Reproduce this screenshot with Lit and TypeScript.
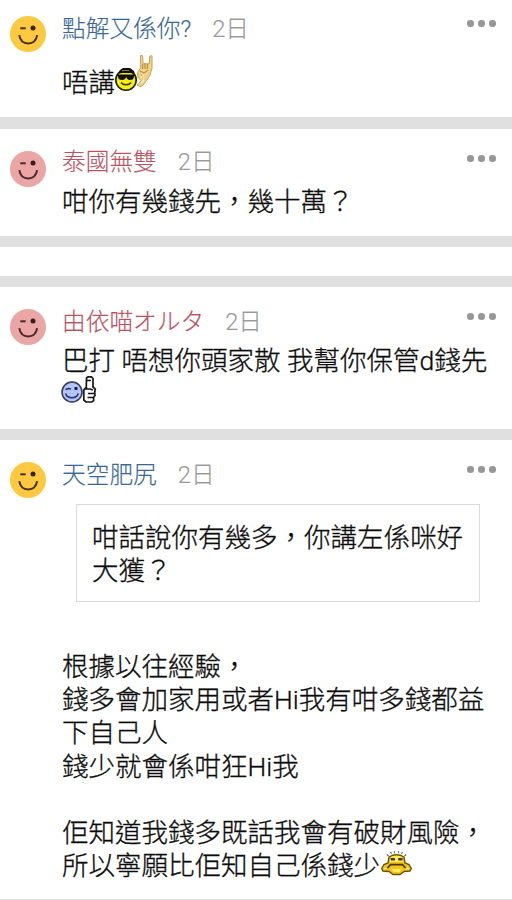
import { LitElement, html, css, svg, TemplateResult } from "lit";
import { customElement, property } from "lit/decorators.js";

@customElement("wink-avatar")
class WinkAvatar extends LitElement {
  @property() tone = "gold";
  static styles = css`
    :host { display: block; width: 36px; height: 36px; }
    svg { display: block; }
    .gold { fill: #fcc940; }
    .pink { fill: #eaa5a5; }
    .line { fill: none; stroke: #493018; stroke-width: 2; }
    .eye { fill: #38220f; }
    .pink ~ .line { stroke: #50282c; }
    .pink ~ .eye { fill: #3a1d22; }
  `;
  render() {
    return html`<svg width="36" height="36" viewBox="0 0 36 36">
      <circle class=${this.tone} cx="18" cy="18" r="18" />
      <path class="line" d="M10.3 12.3h5.4" />
      <path class="line" d="M9.3 19.2c.8 5.2 4.3 8.3 8.9 8.3s8.100-3.100 8.900-8.300" />
      <circle class="eye" cx="23" cy="11.900" r="2.500" />
    </svg>`;
  }
}

const drawings: Record<string, TemplateResult> = {
  cool: svg`
    <circle cx="11" cy="13" r="10.200" fill="#f4ef0c" stroke="#1c1c00" stroke-width="1.600"/>
    <path d="M3 7L5 3 8 1h7l4 3 1 4-4-2H7z" fill="#111"/>
    <path d="M7 3.500h7" stroke="#777" stroke-width="1"/>
    <path d="M2 7.500h18v1.500h-1c0 3-1.500 4-4 4s-3.500-1.500-3.800-3.500C11 11.500 9.500 13 7 13s-4-1-4-4H2z" fill="#111"/>
    <path d="M6 15.500c2 3 8 3 10 0" fill="none" stroke="#3d3500" stroke-width="1.400"/>`,
  horns: svg`
    <path d="M3.500 .5l2 .2.600 8h6.200l.4-7.500 2.300-.5v12.500l-2 7-4 6-3 4-3 1.500L0 30l2-1.500 2-3L.8 22V17l2.500-3.500z" fill="#efd18a" stroke="#c8a456" stroke-width="1"/>
    <path d="M5.700 9v5M8 8.500V14M10.300 9v5M3 16l4 2 4-3M4 20l2 1" fill="none" stroke="#a98132" stroke-width="1"/>
    <path d="M4 22l3-2M4 28l3-3" stroke="#fff2bd" stroke-width="1.500"/>`,
  wink: svg`
    <circle cx="11" cy="11" r="10" fill="#b3c4fa" stroke="#303755" stroke-width="1.500"/>
    <path d="M4.500 8.500l3-1 2.500.6" fill="none" stroke="#23345f" stroke-width="1.500"/>
    <rect x="13.500" y="6" width="3" height="3" fill="#172349"/>
    <path d="M4.700 12.500c1.200 5.500 11.200 5.500 12.500 0" fill="none" stroke="#263868" stroke-width="1.500"/>`,
  thumb: svg`
    <path d="M3.500 2l1.500-1.200h3.500L10 2.500V11l2.300 2-.6 3.500.3 3-1.500 2 .2 3-2 1.500H3L.8 24V14l2.500-3z" fill="#fff" stroke="#161616" stroke-width="1.700"/>
    <path d="M4 4.500h4M2 13h5l3 1M5 17.500h6M4.500 21.500h6M3.500 11v2" fill="none" stroke="#161616" stroke-width="1.500"/>`,
  upset: svg`
    <path d="M8 6q7.500-4.500 15 0l1 6 4 1.500 2.300 4-1.300 2.500-6 .5-4 3h-7l-4-3-6-.5-1.300-2.500L3 13.500 7 12z" fill="#f0c51f" stroke="#6d5306" stroke-width="1.400"/>
    <path d="M10 6q5.500-2.500 11 0l1 5H9zM11 18h9l-1.500 3h-6z" fill="#ffee5a"/>
    <path d="M6 3.500l1.500 1.500M9.500 1l1 1.800M13.500 .3v2M17.500 .3v2M21.500 1l-1 1.800M25 3.500L23.500 5" stroke="#666" stroke-width="1.200"/>
    <path d="M9.500 7h4.500v2.500h-4zM17 7h4.500v2.500h-4z" fill="#4a3506"/>
    <path d="M6 17.500l3.500-3.800h12l3.500 3.800" fill="none" stroke="#4f3702" stroke-width="1.700"/>
    <path d="M3.500 17.500h3M24.500 17.500h3" stroke="#fff3a0" stroke-width="1.500"/>`,
};

@customElement("emote-icon")
class EmoteIcon extends LitElement {
  @property() name = "cool";
  static styles = css`
    :host { display: inline-block; line-height: 0; height: 0; }
    svg { display: block; overflow: visible; }
    .cool { width: 22px; height: 24px; margin-top: -25px; }
    .horns { width: 16px; height: 32px; margin-top: -37px; }
    .wink { width: 22px; height: 22px; margin: -22px 0 0 -1px; }
    .thumb { width: 13px; height: 27px; margin-top: -27px; }
    .upset { width: 31px; height: 25px; margin: -24px 0 0 1px; }
  `;
  render() {
    const box: Record<string, string> = {
      cool: "0 0 22 24", horns: "0 0 16 32", wink: "0 0 22 22", thumb: "0 0 13 27", upset: "0 0 31 25",
    };
    return html`<svg class=${this.name} viewBox=${box[this.name]}>${drawings[this.name]}</svg>`;
  }
}

interface Comment {
  place: string;
  name: string;
  tone: string;
  quote?: TemplateResult;
  body: TemplateResult;
}

const comments: (Comment | null)[] = [
  {
    place: "first", name: "點解又係你?", tone: "gold",
    body: html`唔講<emote-icon name="cool"></emote-icon><emote-icon name="horns"></emote-icon>`,
  },
  { place: "second", name: "泰國無雙", tone: "pink", body: html`咁你有幾錢先，幾十萬？` },
  null,
  {
    place: "third", name: "由依喵オルタ", tone: "pink",
    body: html`巴打 唔想你頭家散 我幫你保管d錢先<br><emote-icon name="wink"></emote-icon><emote-icon name="thumb"></emote-icon>`,
  },
  {
    place: "fourth", name: "天空肥尻", tone: "gold",
    quote: html`咁話說你有幾多，你講左係咪好<br>大獲？`,
    body: html`根據以往經驗，<br>錢多會加家用或者Hi我有咁多錢都益<br>下自己人<br>錢少就會係咁狂Hi我<br><br>佢知道我錢多既話我會有破財風險，<br>所以寧願比佢知自己係錢少<emote-icon name="upset"></emote-icon>`,
  },
];

@customElement("app-root")
class AppRoot extends LitElement {
  static styles = css`
    :host {
      display: flex; flex-direction: column; width: 512px; height: 900px; overflow: hidden;
      background: #fff; color: #0c0c0c;
      font-family: Roboto, "Noto Sans CJK TC", sans-serif; font-weight: 300;
    }
    .card {
      display: grid; grid-template-columns: 36px 1fr; column-gap: 16px; align-items: start;
      box-sizing: border-box; flex: none; padding: 22px 16px 0 10px;
      border-bottom: 11px solid #e0e0e0; background: #fff;
    }
    .first { height: 129px; padding-top: 16px; border-bottom-width: 12px; }
    .second { height: 118px; }
    .third { height: 153px; }
    .fourth { height: 470px; border-bottom-color: #e6e6e6; }
    .blank { height: 40px; }
    .head { display: flex; align-items: center; height: 24px; font-size: 23.700px; line-height: 24px; white-space: nowrap; -webkit-text-stroke: .15px; }
    .head > span { position: relative; top: 1px; }
    .second .head { margin-top: -1px; }
    .second .head > span { top: 0; }
    .gold { color: #3a6796; }
    .pink { color: #b95362; }
    .time { color: #999; margin-left: 21px; }
    .head > .more { top: 0; display: flex; gap: 4.400px; margin: -9px 0 0 auto; }
    .second .head > .more { top: 1px; }
    .more i { width: 6.600px; height: 6.600px; border-radius: 50%; background: #979797; }
    .body, .quote { font-size: 26.500px; line-height: 33.200px; white-space: nowrap; -webkit-text-stroke: .3px; }
    .first .body { margin-top: 26px; }
    .second .body { margin-top: 11px; }
    .third .body { margin-top: 11px; }
    .fourth .body { margin-top: 48px; }
    .quote {
      box-sizing: border-box; width: 404px; height: 98px; margin: 18px 0 0 14px;
      padding: 16px 15px; border: 1px solid #d9d9d9;
    }
  `;

  render() {
    return comments.map((c) => c
      ? html`<article class="card ${c.place}">
          <wink-avatar tone=${c.tone}></wink-avatar>
          <div>
            <div class="head">
              <span class=${c.tone}>${c.name}</span><span class="time">2日</span>
              <span class="more"><i></i><i></i><i></i></span>
            </div>
            ${c.quote ? html`<div class="quote">${c.quote}</div>` : ""}
            <div class="body">${c.body}</div>
          </div>
        </article>`
      : html`<div class="card blank"></div>`);
  }
}
